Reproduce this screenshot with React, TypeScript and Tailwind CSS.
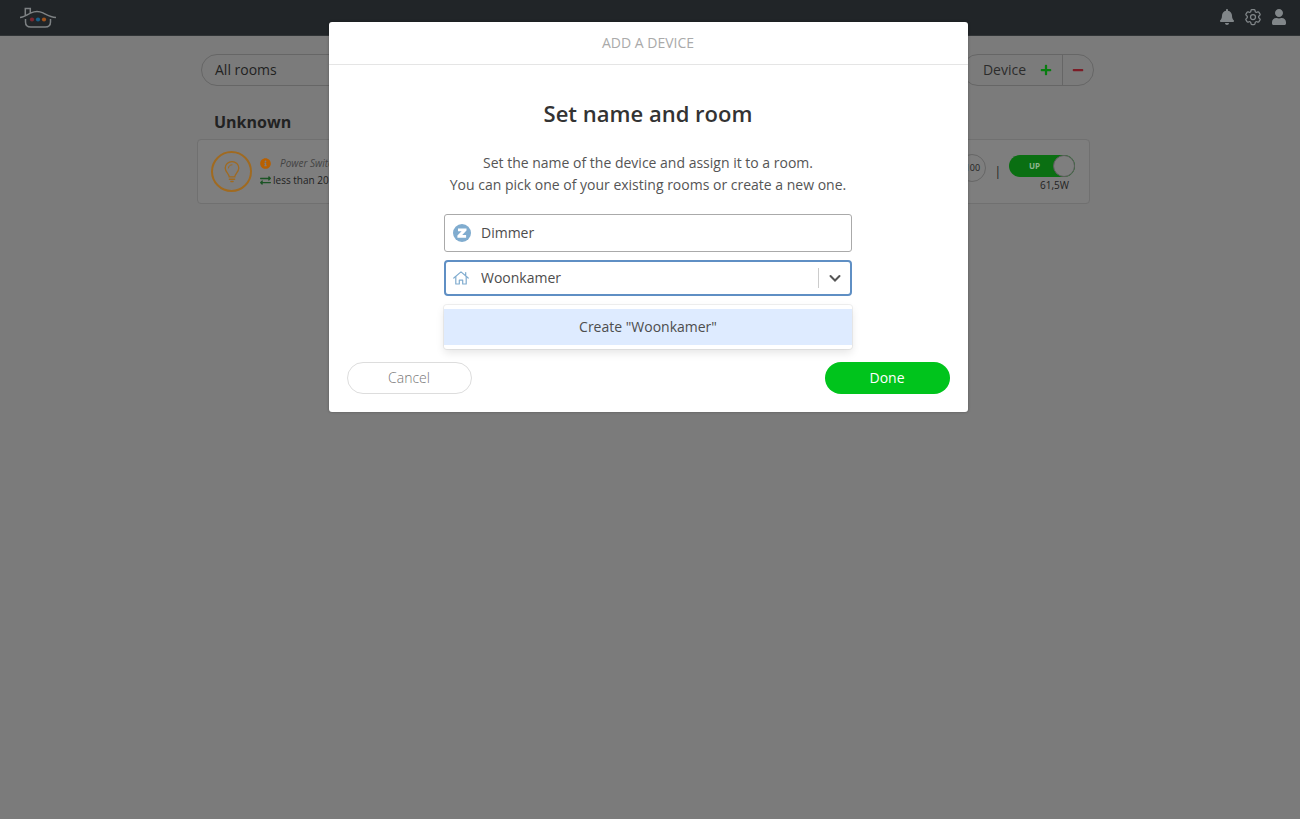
import React from "react";
import { FaBell, FaUser, FaPlus, FaMinus, FaInfoCircle, FaExchangeAlt } from "react-icons/fa";
import { HiOutlineCog6Tooth } from "react-icons/hi2";

function HouseLogo() {
  return (
    <svg width="38" height="22" viewBox="0 0 38 22" fill="none" stroke="#7d8183" strokeWidth="1.5" aria-hidden="true">
      <path d="M1 10.500c4-.3 7-2.600 11-4.600 4-2 8-2 12 0 4 2 7.500 4.300 13 4.600" />
      <path d="M6.300 8.500V1.500h5v4.500" />
      <path d="M6.500 12v3c0 3.500 2.300 5 5.300 5h14.400c3 0 5.300-1.500 5.300-5v-3" />
      <g stroke="none">
        <circle cx="13" cy="12.500" r="2.100" fill="#7c2730" />
        <circle cx="19" cy="12.500" r="2.100" fill="#17608a" />
        <circle cx="25" cy="12.500" r="2.100" fill="#a0531c" />
      </g>
    </svg>
  );
}

function Bulb() {
  return (
    <svg width="16" height="22" viewBox="0 0 16 22" fill="none" stroke="currentColor" strokeWidth="1.3" strokeLinecap="round" aria-hidden="true">
      <path d="M5.200 15.800c0-3-4-4.800-4-8.800a6.800 6.300 0 0 1 13.600 0c0 4-4 5.800-4 8.800z" />
      <path d="M4.500 7c0-2 1.500-3.200 3.500-3.200" strokeWidth="1" />
      <path d="M5.500 18.300h5M7 20.500h2" strokeWidth="1.600" />
    </svg>
  );
}

function ZWave() {
  return (
    <svg width="18" height="18" viewBox="0 0 18 18" aria-hidden="true">
      <circle cx="9" cy="9" r="9" fill="#80accf" />
      <path d="M5 4.500h8.500v2L9.200 11h3.900v2.700H4.400v-2.200l4.200-4.300H5z" fill="#fff" />
    </svg>
  );
}

function Home() {
  return (
    <svg width="16" height="14" viewBox="0 0 16 14" fill="none" stroke="#80accf" strokeWidth="1.2" strokeLinejoin="round" strokeLinecap="round" aria-hidden="true">
      <path d="M.8 7 8 .9 15.200 7M12.700 4.700V1.500" />
      <path d="M2.800 5.700V13h3.500V9.200h3.400V13h3.500V5.700" />
    </svg>
  );
}

function Header() {
  return (
    <header className="flex h-9 items-center justify-between border-b border-[#303436] bg-[#212528] pl-[19px] pr-3">
      <a href="#home" aria-label="Home"><HouseLogo /></a>
      <nav className="flex items-center gap-2 pb-[2px] text-[#818689]">
        <button aria-label="Notifications" className="flex w-[18px] justify-center"><FaBell size={16} /></button>
        <button aria-label="Settings" className="flex w-[18px] justify-center"><HiOutlineCog6Tooth size={20} className="shrink-0" /></button>
        <button aria-label="Account" className="flex w-[18px] justify-center"><FaUser size={16} /></button>
      </nav>
    </header>
  );
}

function Devices() {
  return (
    <main className="mr-[13px] px-4 pt-[18px]">
      <div className="mx-auto max-w-[893px]">
        <div className="-mr-1 flex items-center justify-between pl-1">
          <button className="h-8 w-60 rounded-full border border-[#666] pl-[13px] text-left text-sm text-[#222]">All rooms</button>
          <div className="flex h-8 items-stretch rounded-full border border-[#666] text-[#2c2c2c]">
            <button className="flex items-center gap-[14px] pl-5 pr-[10px] text-sm">Device<FaPlus size={12} color="#087d10" /></button>
            <button aria-label="Remove device" className="flex items-center border-l border-[#666] px-[9px]"><FaMinus size={12} color="#7c1c26" /></button>
          </div>
        </div>
        <h2 className="mt-6 pl-[17px] text-base leading-6 font-bold text-[#222]">Unknown</h2>
        <section className="mt-[5px] flex h-[65px] items-center justify-between rounded-sm border border-[#707070] bg-[#7e7e7e] px-[13px]">
          <div className="flex items-center gap-2">
            <div className="flex size-[41px] items-center justify-center rounded-full border-2 border-[#a06a20] text-[#a06a20]"><Bulb /></div>
            <div className="text-[10px] leading-[17px] text-[#222]">
              <p className="flex items-center gap-[9px] italic text-[#444]"><FaInfoCircle size={11} color="#b96000" />Power Switch</p>
              <p className="flex items-center gap-[2px]"><FaExchangeAlt size={11} color="#1b5425" />less than 20 s</p>
            </div>
          </div>
          <div className="flex items-center gap-2 text-[10px] text-[#222]">
            <div className="mb-2 flex size-7 items-center justify-center rounded-full border border-[#666] text-[9px]">100</div>
            <span className="text-xs">|</span>
            <div className="flex flex-col items-end pt-1">
              <button role="switch" aria-checked="true" aria-label="Power" className="mr-px flex h-[22px] w-[66px] items-center justify-between rounded-full bg-[#0a6f12] pl-5 text-[8px] font-bold text-[#8fb58f]">
                UP<span className="size-[22px] rounded-full border border-[#5c5c5c] bg-[#7e7e7e]" />
              </button>
              <span className="pr-[7px] leading-4">61,5W</span>
            </div>
          </div>
        </section>
      </div>
    </main>
  );
}

function AddDevice() {
  return (
    <div className="absolute inset-0 flex items-start justify-center pr-1 pt-[22px]">
      <div role="dialog" aria-modal="true" aria-labelledby="dialog-title" className="w-full max-w-[639px] rounded-[3px] bg-white text-[#4d4d4d] shadow-[0_0_3px_rgba(0,0,0,0.3)]">
        <h1 id="dialog-title" className="border-b border-[#e5e5e5] py-[9px] text-center text-sm leading-6 text-[#aaa]">ADD A DEVICE</h1>
        <div className="mx-auto max-w-[408px] pt-8 text-center text-sm">
          <h2 className="text-[22px] leading-8 font-semibold text-[#333]">Set name and room</h2>
          <p className="mt-[23px] leading-[22px] text-[#555]">Set the name of the device and assign it to a room.<br />You can pick one of your existing rooms or create a new one.</p>
          <label className="mt-[18px] flex h-[38px] items-center gap-[10px] rounded-[3px] border border-[#aaa] pl-2">
            <ZWave />
            <input aria-label="Device name" defaultValue="Dimmer" className="min-w-0 flex-1 outline-none" />
          </label>
          <div className="mt-2 flex h-9 items-center rounded-[4px] border-2 border-[#5f8fc4] pl-[7px]">
            <Home />
            <input aria-label="Room" defaultValue="Woonkamer" className="ml-3 min-w-0 flex-1 outline-none" />
            <button aria-label="Show rooms" className="flex h-5 w-8 items-center justify-center border-l border-[#ccc]">
              <svg width="12" height="8" viewBox="0 0 12 8" fill="none" stroke="#555" strokeWidth="2" strokeLinecap="round"><path d="m1.500 2 4.500 4.500 4.500-4.500" /></svg>
            </button>
          </div>
          <div role="listbox" aria-label="Rooms" className="mt-[9px] rounded-[3px] py-1 shadow-[0_0_0_1px_rgba(0,0,0,0.06),0_4px_9px_rgba(0,0,0,0.1)]">
            <button role="option" aria-selected="true" className="block h-9 w-full bg-[#deebff]">Create "Woonkamer"</button>
          </div>
        </div>
        <div className="mt-[13px] flex justify-between px-[18px] pb-[18px] text-sm">
          <button className="h-8 w-[125px] rounded-full border border-[#ddd] font-light text-[#777]">Cancel</button>
          <button className="h-8 w-[125px] rounded-full bg-[#00c41c] text-white">Done</button>
        </div>
      </div>
    </div>
  );
}

export default function App() {
  return (
    <div className="relative min-h-screen bg-[#7b7b7b] font-['Open_Sans',sans-serif]">
      <Header />
      <Devices />
      <AddDevice />
    </div>
  );
}
